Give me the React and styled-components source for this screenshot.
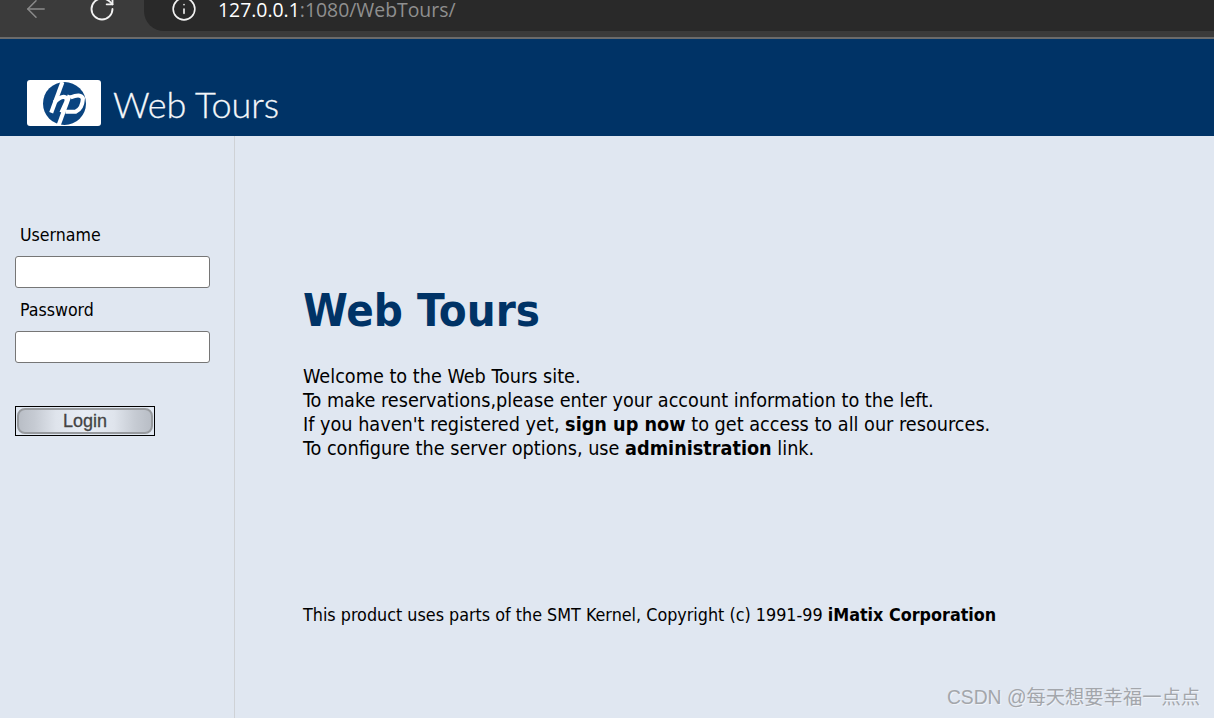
import React from "react";
import styled, { createGlobalStyle } from "styled-components";
import { ArrowLeft, RotateCw, Info } from "lucide-react";

const GlobalStyle = createGlobalStyle`
  html, body {
    margin: 0;
    padding: 0;
    height: 100%;
    overflow: hidden;
    background: #e0e7f1;
  }
  #root {
    height: 100%;
  }
`;

const Page = styled.div`
  height: 718px;
  display: flex;
  flex-direction: column;
  font-family: "DejaVu Sans Condensed", "DejaVu Sans", sans-serif;
  color: #000;
  position: relative;
`;

const BrowserBar = styled.div`
  height: 39px;
  flex: none;
  box-sizing: border-box;
  background: #3b3b3b;
  border-bottom: 2px solid #6b6b6b;
  display: flex;
  align-items: flex-start;
  overflow: hidden;
`;

const NavButton = styled.div`
  width: ${({ $w }) => $w}px;
  height: 35px;
  flex: none;
  display: flex;
  justify-content: center;
  color: ${({ $dim }) => ($dim ? "#8a8a8a" : "#f2f2f2")};
  & > svg {
    margin-top: -5px;
  }
`;

const AddressPill = styled.div`
  flex: 1;
  height: 31px;
  margin-left: 12px;
  background: #292929;
  border-radius: 0 0 0 20px;
  display: flex;
  align-items: flex-start;
  padding-left: 27px;
  color: #f2f2f2;
  & > svg {
    margin-top: -4px;
  }
`;

const UrlText = styled.div`
  margin-left: 21px;
  padding-top: 1px;
  font-family: "Open Sans", sans-serif;
  font-size: 19.4px;
  line-height: 17px;
  white-space: nowrap;
  color: #fff;
  & > span {
    color: #8f8f8f;
  }
`;

const Header = styled.div`
  height: 97px;
  flex: none;
  background: #003366;
  display: flex;
  align-items: flex-end;
  padding: 0 0 10px 27px;
  box-sizing: border-box;
`;

const LogoBox = styled.div`
  width: 74px;
  height: 46px;
  background: #fff;
  border-radius: 3px;
  display: flex;
  align-items: center;
  justify-content: center;
`;

const LogoText = styled.div`
  margin-left: 12px;
  font-family: Lato, sans-serif;
  font-weight: 300;
  font-size: 36px;
  line-height: 46px;
  color: #f4f7fa;
  white-space: nowrap;
  -webkit-text-stroke: 0.3px #f4f7fa;
  transform: translateY(1px);
`;

const Main = styled.div`
  flex: 1;
  display: flex;
  min-height: 0;
`;

const Sidebar = styled.form`
  width: 235px;
  flex: none;
  box-sizing: border-box;
  border-right: 1px solid #cfd2d6;
  padding: 88px 0 0 15px;
  display: flex;
  flex-direction: column;
  align-items: flex-start;
`;

const FieldLabel = styled.label`
  font-size: 17.6px;
  line-height: 22px;
  margin: ${({ $top }) => $top}px 0 10px 5px;
`;

const TextInput = styled.input`
  width: 195px;
  height: 32px;
  box-sizing: border-box;
  background: #fff;
  border: 1px solid #767676;
  border-radius: 3px;
  padding: 0;
`;

const LoginButton = styled.button`
  margin-top: 43px;
  width: 140px;
  height: 30px;
  box-sizing: border-box;
  padding: 0;
  border: 1px solid #000;
  background: #e0e7f1;
  display: flex;
  cursor: pointer;
`;

const LoginFace = styled.span`
  flex: 1;
  margin: 1px;
  border: 2px solid #979a9e;
  border-radius: 8px;
  background: linear-gradient(90deg, #b9bec6 0%, #c6cbd3 12%, #dfe4ec 28%, #e8edf5 50%, #dfe4ec 72%, #c6cbd3 88%, #b9bec6 100%);
  font-family: "Liberation Sans", sans-serif;
  font-size: 18px;
  line-height: 22px;
  color: #444;
  -webkit-text-stroke: 0.3px #444;
  text-align: center;
`;

const Content = styled.div`
  flex: 1;
  padding: 147px 0 0 68px;
`;

const Title = styled.h1`
  margin: 0;
  font-size: 45.2px;
  line-height: 56px;
  font-weight: 700;
  color: #003366;
`;

const Intro = styled.p`
  margin: 26px 0 0;
  font-size: 19.66px;
  line-height: 24px;
`;

const Credit = styled.p`
  margin: 143px 0 0;
  font-size: 17.8px;
  line-height: 22px;
`;

const Watermark = styled.div`
  position: absolute;
  right: 14px;
  bottom: 8px;
  font-family: "Liberation Sans", "Noto Sans CJK SC", sans-serif;
  font-size: 19.3px;
  line-height: 24px;
  color: #a3a6ab;
  text-shadow: 1px 1px 0 #f0f3f8;
`;

const HpLogo = () => (
  <svg width="43" height="43" viewBox="0 0 42 42">
    <circle cx="21" cy="21" r="21" fill="#0a4480" />
    <g stroke="#fff" strokeWidth="4" fill="none">
      <path d="M19 0 L8 30" />
      <path d="M11 20 Q18 13 22 15 Q24 17 22.5 20 L18 30" />
      <path d="M26 13 L15 43" />
      <path d="M27 15 Q37 11 39 16 Q38.5 26 32 29 L22 29" />
    </g>
  </svg>
);

const App = () => (
  <Page>
    <GlobalStyle />
    <BrowserBar>
      <NavButton $w={72} $dim>
        <ArrowLeft size={28} strokeWidth={1.3} />
      </NavButton>
      <NavButton $w={60}>
        <RotateCw size={28} strokeWidth={1.6} />
      </NavButton>
      <AddressPill>
        <Info size={26} strokeWidth={1.5} />
        <UrlText>
          127.0.0.1<span>:1080/WebTours/</span>
        </UrlText>
      </AddressPill>
    </BrowserBar>
    <Header>
      <LogoBox>
        <HpLogo />
      </LogoBox>
      <LogoText>Web Tours</LogoText>
    </Header>
    <Main>
      <Sidebar>
        <FieldLabel $top={0}>Username</FieldLabel>
        <TextInput type="text" />
        <FieldLabel $top={11}>Password</FieldLabel>
        <TextInput type="password" />
        <LoginButton type="button">
          <LoginFace>Login</LoginFace>
        </LoginButton>
      </Sidebar>
      <Content>
        <Title>Web Tours</Title>
        <Intro>
          Welcome to the Web Tours site.
          <br />
          To make reservations,please enter your account information to the left.
          <br />
          If you haven't registered yet, <b>sign up now</b> to get access to all our resources.
          <br />
          To configure the server options, use <b>administration</b> link.
        </Intro>
        <Credit>
          This product uses parts of the SMT Kernel, Copyright (c) 1991-99 <b>iMatix Corporation</b>
        </Credit>
      </Content>
    </Main>
    <Watermark>CSDN @每天想要幸福一点点</Watermark>
  </Page>
);

export default App;
